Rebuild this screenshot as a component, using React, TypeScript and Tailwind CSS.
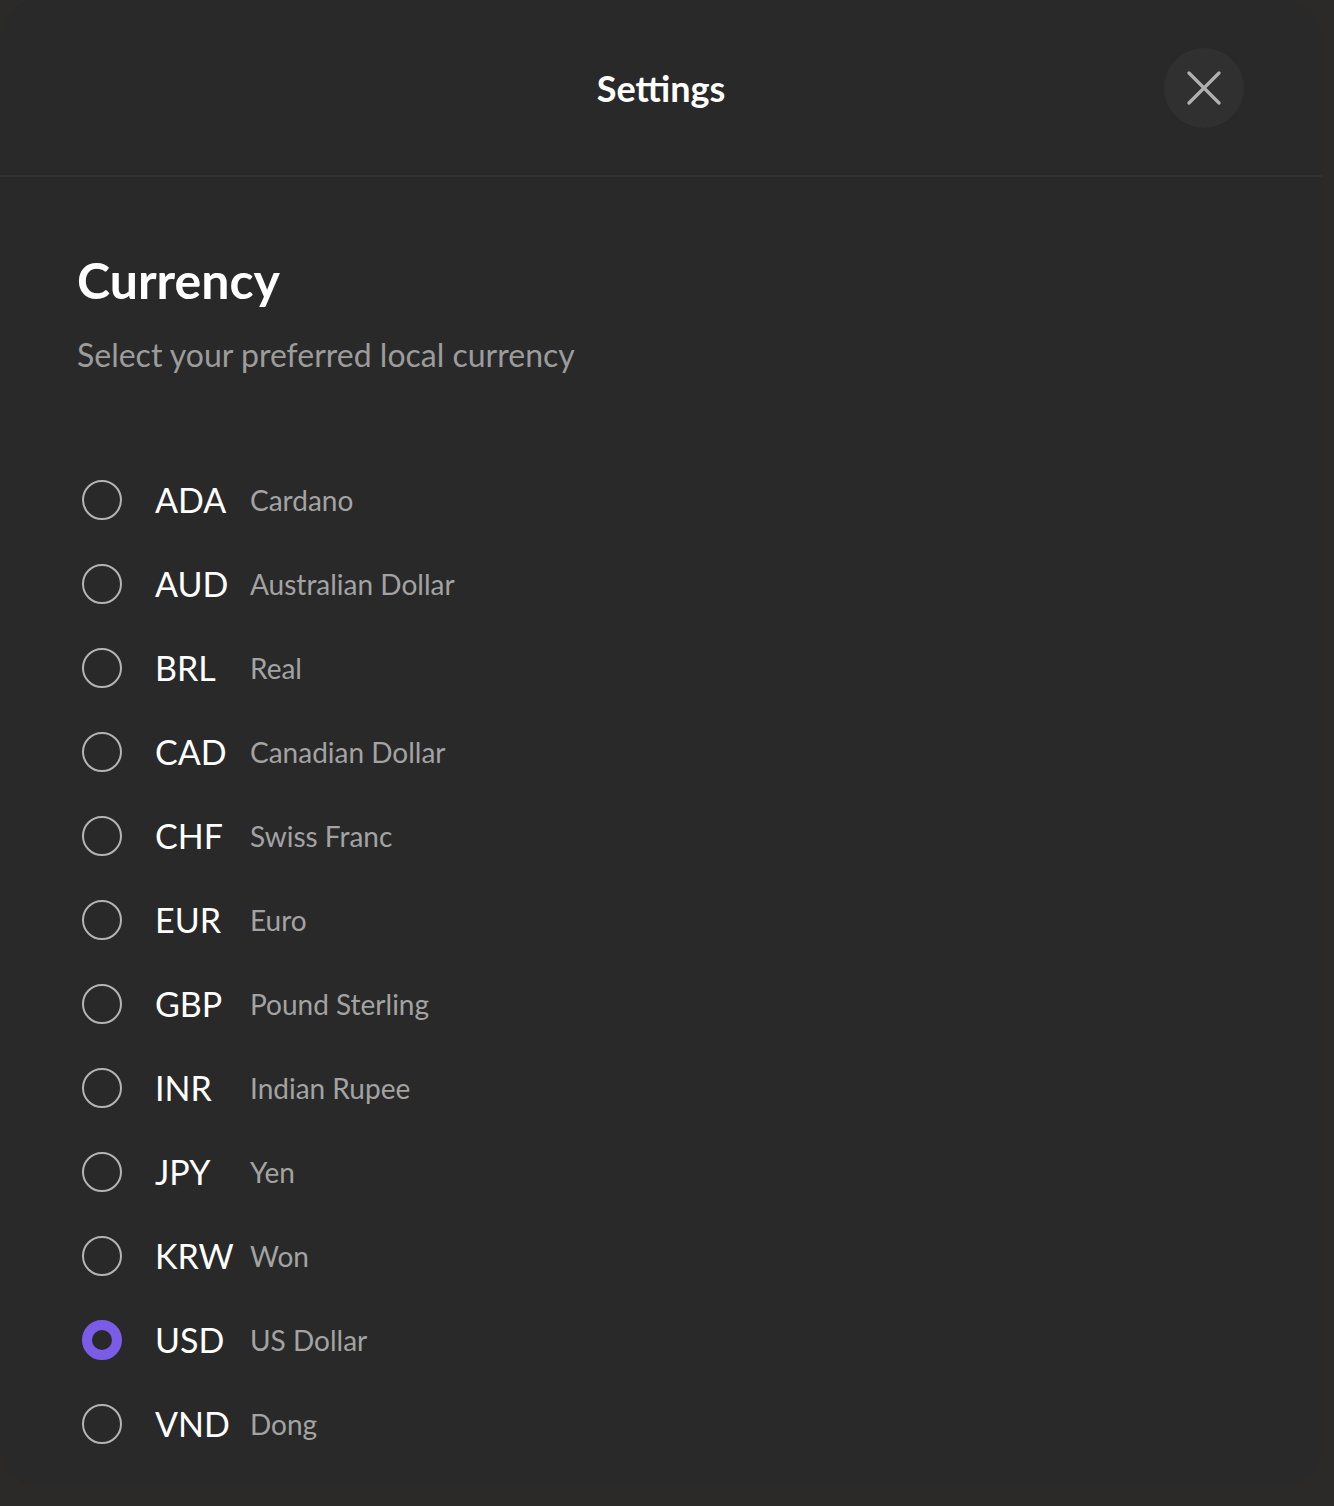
import React, { useState } from 'react';

const currencies = [
  { code: 'ADA', name: 'Cardano' },
  { code: 'AUD', name: 'Australian Dollar' },
  { code: 'BRL', name: 'Real' },
  { code: 'CAD', name: 'Canadian Dollar' },
  { code: 'CHF', name: 'Swiss Franc' },
  { code: 'EUR', name: 'Euro' },
  { code: 'GBP', name: 'Pound Sterling' },
  { code: 'INR', name: 'Indian Rupee' },
  { code: 'JPY', name: 'Yen' },
  { code: 'KRW', name: 'Won' },
  { code: 'USD', name: 'US Dollar' },
  { code: 'VND', name: 'Dong' },
];

export default function App() {
  const [selected, setSelected] = useState('USD');

  return (
    <div className="h-[1506px] w-full bg-[#2b2a28] font-['Lato',sans-serif] overflow-hidden">
      <div className="w-[1322px] h-[1486px] bg-[#292929] rounded-[40px] flex flex-col">
        {/* Header */}
        <div className="h-[177px] shrink-0 border-b-2 border-[#323232] grid grid-cols-[1fr_auto_1fr] items-center">
          <div />
          <h1 className="text-[36px] font-bold text-white leading-none">Settings</h1>
          <div className="flex justify-end pr-[78px]">
            <button className="w-20 h-20 rounded-full bg-[#303030] flex items-center justify-center">
              <svg width="34" height="34" viewBox="0 0 34 34" fill="none">
                <path d="M2 2L32 32M32 2L2 32" stroke="#b0b0b0" strokeWidth="3.2" strokeLinecap="round" />
              </svg>
            </button>
          </div>
        </div>

        {/* Body */}
        <div className="pl-[77px] pt-[78px]">
          <h2 className="text-[50px] font-bold text-white leading-none">Currency</h2>
          <p className="mt-[34px] text-[32px] text-[#9c9c9c] leading-none">Select your preferred local currency</p>

          <div className="mt-[87px] flex flex-col">
            {currencies.map((c) => (
              <button
                key={c.code}
                onClick={() => setSelected(c.code)}
                className="h-[84px] flex items-center text-left"
              >
                <span className="w-[50px] flex justify-center shrink-0">
                  {selected === c.code ? (
                    <span className="w-10 h-10 rounded-full border-[10px] border-[#7b5ce6] bg-[#292929]" />
                  ) : (
                    <span className="w-10 h-10 rounded-full border-[2.5px] border-[#b4b4b4]" />
                  )}
                </span>
                <span className="ml-[28px] w-[95px] text-[34px] text-white leading-none">{c.code}</span>
                <span className="text-[28px] text-[#a3a3a3] leading-none">{c.name}</span>
              </button>
            ))}
          </div>
        </div>
      </div>
    </div>
  );
}
